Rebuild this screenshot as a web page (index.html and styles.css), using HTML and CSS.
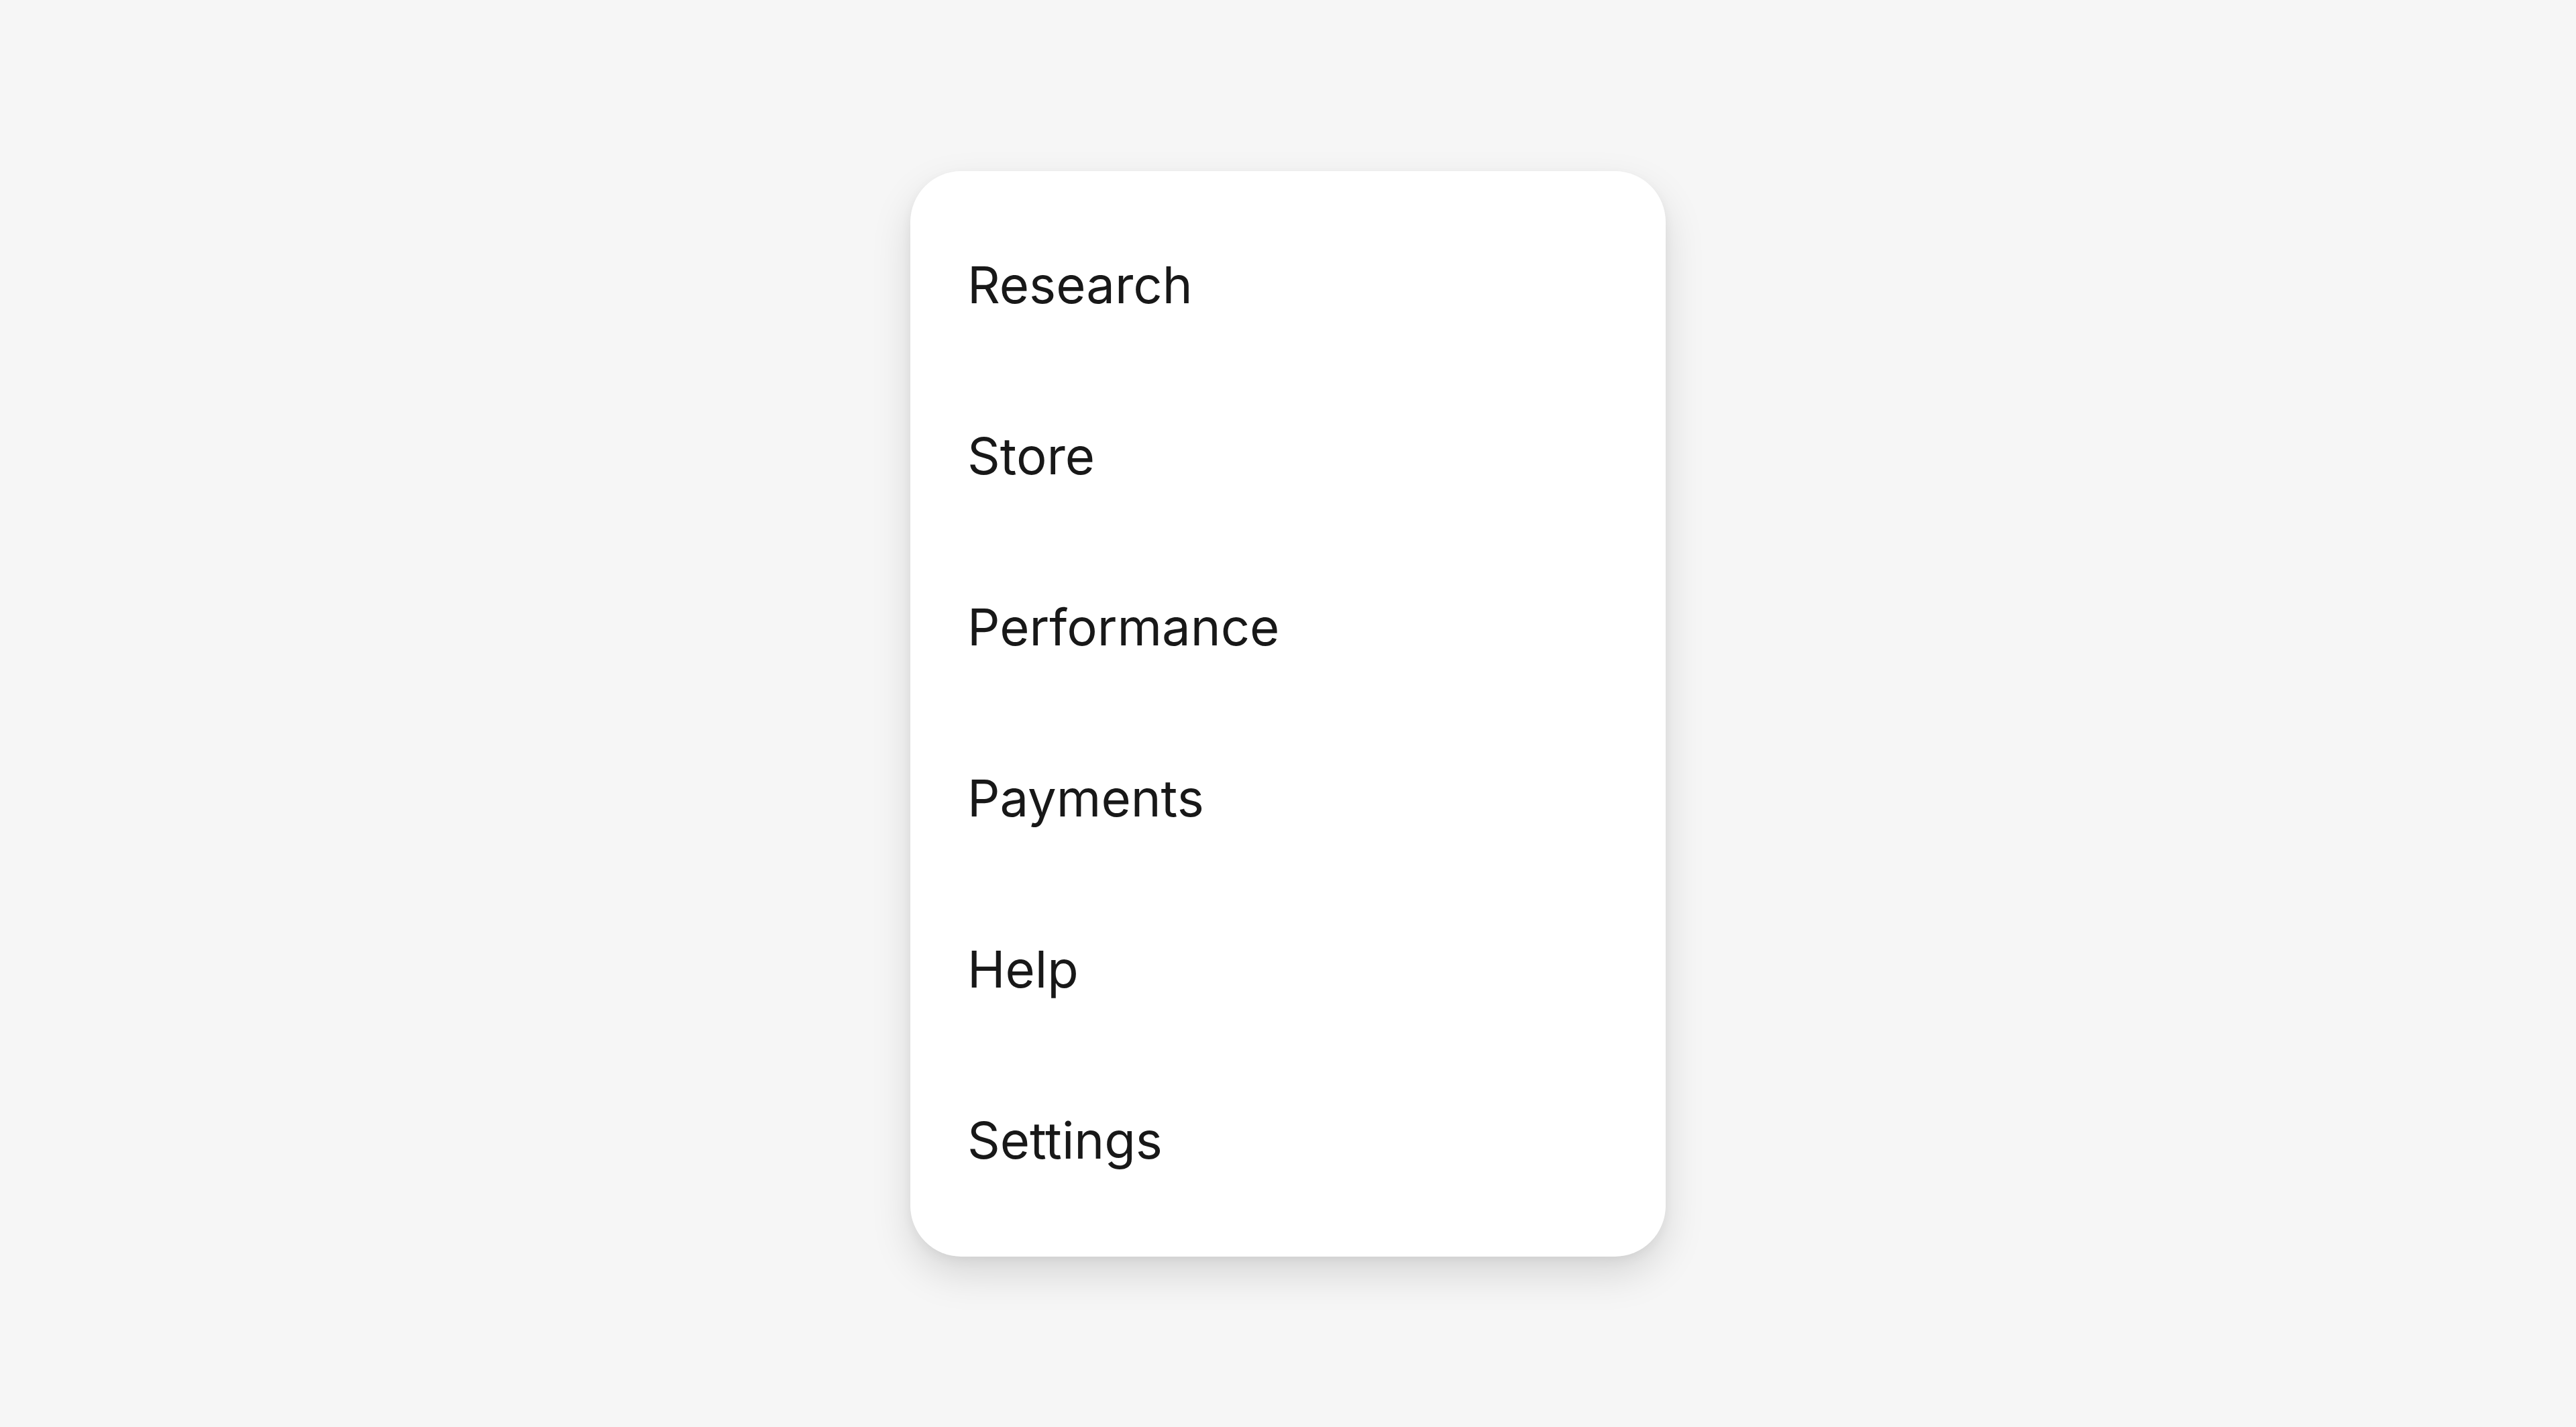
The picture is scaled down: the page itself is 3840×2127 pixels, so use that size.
FILE: index.html
```html
<!DOCTYPE html>
<html lang="en">
<head>
    <meta charset="UTF-8">
    <meta name="viewport" content="width=device-width, initial-scale=1.0">
    <title>Menu</title>
    <link rel="stylesheet" href="styles.css">
</head>
<body>
    <nav class="menu">
        <span class="menu-item">Research</span>
        <span class="menu-item">Store</span>
        <span class="menu-item">Performance</span>
        <span class="menu-item">Payments</span>
        <span class="menu-item">Help</span>
        <span class="menu-item">Settings</span>
    </nav>
</body>
</html>
```

FILE: styles.css
```css
html, body{
    margin: 0;
    height: 100%;
}

body{
    background-color: #f6f6f6;
    font-family: Inter, "Noto Sans", sans-serif;
    display: flex;
    align-items: center;
    justify-content: center;
}

.menu{
    width: 1126px;
    box-sizing: border-box;
    padding: 42px 0 46px;
    background-color: #fff;
    border-radius: 76px;
    box-shadow: 0 26px 60px rgba(0,0,0,0.13), 0 6px 16px rgba(0,0,0,0.05);
    display: flex;
    flex-direction: column;
}

.menu-item{
    height: 255px;
    display: flex;
    align-items: center;
    padding-left: 85px;
    font-size: 76px;
    color: #181818;
    cursor: pointer;
}
```
